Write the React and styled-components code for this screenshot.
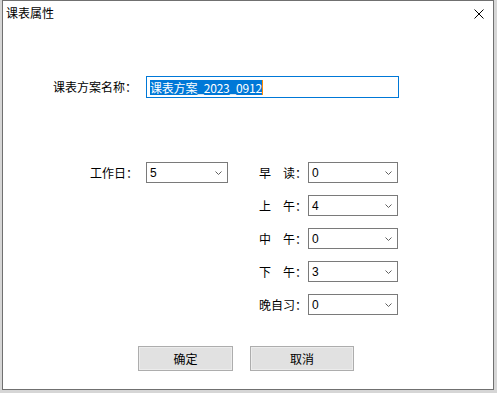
import React from "react";
import styled, { createGlobalStyle } from "styled-components";

const GlobalStyle = createGlobalStyle`
  html, body {
    margin: 0;
    padding: 0;
    background: #d6d6d6;
  }
  body {
    font-family: "Liberation Sans", "Noto Sans CJK SC", sans-serif;
    font-size: 12px;
    color: #000;
  }
`;

const Page = styled.div`
  width: 497px;
  height: 393px;
  overflow: hidden;
`;

const Window = styled.div`
  margin-left: 2px;
  width: 490px;
  height: 388px;
  background: #fff;
  border: 1px solid #707070;
  display: flex;
  flex-direction: column;
`;

const TitleBar = styled.div`
  height: 28px;
  display: flex;
  align-items: flex-start;
  justify-content: space-between;
  padding: 4px 9px 0 3px;
  box-sizing: border-box;
  font-family: "Noto Sans CJK SC", sans-serif;
  font-size: 12px;
  line-height: 16px;
`;

const CloseButton = styled.div`
  width: 10px;
  height: 10px;
  margin-top: 4px;
  display: flex;
`;

const Body = styled.div`
  display: flex;
  flex-direction: column;
`;

const NameRow = styled.div`
  margin-top: 47px;
  padding-left: 50px;
  display: flex;
  align-items: center;
  gap: 9px;
`;

const Label = styled.div`
  width: ${p => p.w}px;
  font-family: "Noto Sans CJK SC", sans-serif;
  font-size: 12px;
  line-height: 16px;
  white-space: pre;
`;

const TextBox = styled.div`
  width: 253px;
  height: 22px;
  box-sizing: border-box;
  border: 1px solid #0078d7;
  display: flex;
  align-items: center;
  padding-left: 3px;
`;

const Selection = styled.span`
  background: #0078d7;
  color: #fff;
  font-family: "Noto Sans CJK SC", sans-serif;
  font-size: 12px;
  line-height: 15px;
  height: 15px;
  display: flex;
  align-items: center;
  letter-spacing: -0.2px;
`;

const Caret = styled.span`
  width: 1px;
  height: 15px;
  background: #ff8a00;
`;

const Lower = styled.div`
  margin-top: 64px;
  padding-left: 87px;
  display: flex;
  align-items: flex-start;
`;

const Field = styled.div`
  display: flex;
  align-items: center;
  gap: ${p => p.gap}px;
`;

const RightColumn = styled.div`
  margin-left: 31px;
  display: flex;
  flex-direction: column;
  gap: 12px;
`;

const SelectBox = styled.div`
  width: ${p => p.w}px;
  height: 21px;
  box-sizing: border-box;
  border: 1px solid #7a7a7a;
  background: #fff;
  display: flex;
  align-items: center;
  justify-content: space-between;
  padding: 0 5px 0 3px;
  font-size: 12px;
`;

const Buttons = styled.div`
  margin-top: 31px;
  padding-left: 135px;
  display: flex;
  gap: 17px;
`;

const Button = styled.div`
  width: ${p => p.w}px;
  height: 25px;
  box-sizing: border-box;
  border: 1px solid #adadad;
  background: #e1e1e1;
  box-shadow: inset 0 0 0 1px #ececec;
  display: flex;
  align-items: center;
  justify-content: center;
  font-family: "Noto Sans CJK SC", sans-serif;
  font-size: 12px;
`;

function Chevron() {
  return (
    <svg width="7" height="4" viewBox="0 0 7 4">
      <polyline points="0.5,0.5 3.5,3.5 6.5,0.5" fill="none" stroke="#606060" strokeWidth="1" />
    </svg>
  );
}

function Select({ value, w }) {
  return (
    <SelectBox w={w}>
      <span>{value}</span>
      <Chevron />
    </SelectBox>
  );
}

const periods = [
  ["早\u3000读：", "0"],
  ["上\u3000午：", "4"],
  ["中\u3000午：", "0"],
  ["下\u3000午：", "3"],
  ["晚自习：", "0"],
];

export default function App() {
  return (
    <Page>
      <GlobalStyle />
      <Window>
        <TitleBar>
          <span>课表属性</span>
          <CloseButton>
            <svg width="10" height="10" viewBox="0 0 10 10">
              <path d="M0.5 0.5 L9.5 9.5 M9.5 0.5 L0.5 9.5" stroke="#000" strokeWidth="1" />
            </svg>
          </CloseButton>
        </TitleBar>
        <Body>
          <NameRow>
            <Label w={84}>课表方案名称：</Label>
            <TextBox>
              <Selection>课表方案_2023_0912</Selection>
              <Caret />
            </TextBox>
          </NameRow>
          <Lower>
            <Field gap={8}>
              <Label w={48}>工作日：</Label>
              <Select value="5" w={82} />
            </Field>
            <RightColumn>
              {periods.map(([label, value]) => (
                <Field gap={1} key={label}>
                  <Label w={48}>{label}</Label>
                  <Select value={value} w={90} />
                </Field>
              ))}
            </RightColumn>
          </Lower>
          <Buttons>
            <Button w={95}>确定</Button>
            <Button w={104}>取消</Button>
          </Buttons>
        </Body>
      </Window>
    </Page>
  );
}
